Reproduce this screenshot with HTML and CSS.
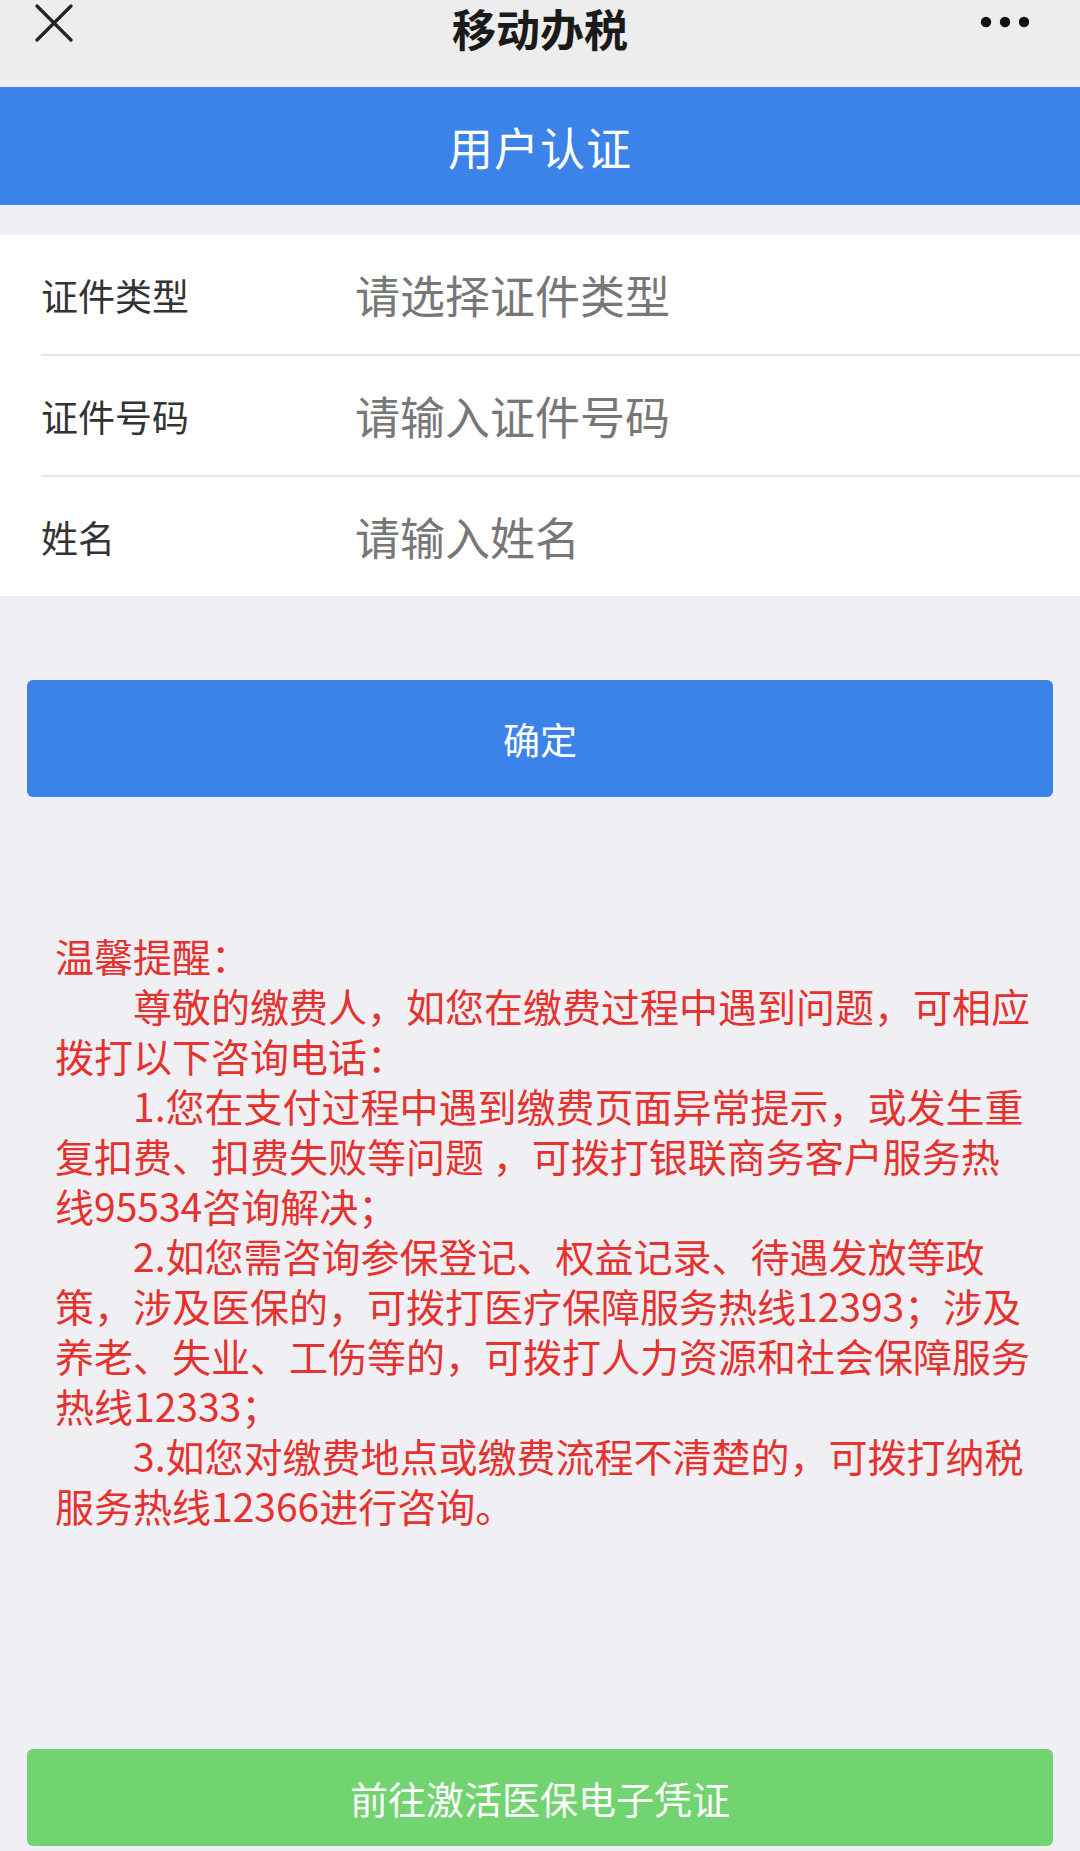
FILE: index.html
```html
<!DOCTYPE html>
<html lang="zh-CN">
<head>
<meta charset="utf-8">
<title>移动办税</title>
<link rel="stylesheet" href="styles.css">
</head>
<body>
<div class="page">
  <div class="topbar">
    <div class="tb-left">
      <svg class="close-icon" width="38" height="38" viewBox="0 0 38 38">
        <path d="M2 2 L36 36 M36 2 L2 36" stroke="#222" stroke-width="3.2" stroke-linecap="round" fill="none"/>
      </svg>
    </div>
    <div class="tb-title">移动办税</div>
    <div class="tb-right">
      <svg class="more-icon" width="50" height="12" viewBox="0 0 50 12">
        <circle cx="6" cy="6" r="5.2" fill="#111"/>
        <circle cx="25" cy="6" r="5.2" fill="#111"/>
        <circle cx="44" cy="6" r="5.2" fill="#111"/>
      </svg>
    </div>
  </div>

  <div class="header">用户认证</div>

  <div class="form">
    <div class="row">
      <div class="label">证件类型</div>
      <div class="placeholder">请选择证件类型</div>
    </div>
    <div class="row">
      <div class="label">证件号码</div>
      <div class="placeholder">请输入证件号码</div>
    </div>
    <div class="row">
      <div class="label">姓名</div>
      <div class="placeholder">请输入姓名</div>
    </div>
  </div>

  <div class="btn btn-confirm">确定</div>

  <div class="notice">
    <div class="notice-title">温馨提醒：</div>
    <p class="para">尊敬的缴费人，如您在缴费过程中遇到问题，可相应拨打以下咨询电话：</p>
    <p class="para">1.您在支付过程中遇到缴费页面异常提示，或发生重复扣费、扣费失败等问题 ，可拨打银联商务客户服务热线95534咨询解决；</p>
    <p class="para">2.如您需咨询参保登记、权益记录、待遇发放等政策，涉及医保的，可拨打医疗保障服务热线12393；涉及养老、失业、工伤等的，可拨打人力资源和社会保障服务热线12333；</p>
    <p class="para">3.如您对缴费地点或缴费流程不清楚的，可拨打纳税服务热线12366进行咨询。</p>
  </div>

  <div class="btn btn-green">前往激活医保电子凭证</div>
</div>
</body>
</html>
```

FILE: styles.css
```css
html, body {
  margin: 0;
  padding: 0;
}
body {
  background: #efeff4;
  font-family: "Noto Sans CJK SC", "Noto Sans", sans-serif;
  width: 1080px;
  height: 1851px;
  overflow: hidden;
}
.page {
  display: flex;
  flex-direction: column;
}
.topbar {
  height: 82px;
  background: #ededed;
  display: grid;
  grid-template-columns: 1fr auto 1fr;
  align-items: start;
}
.tb-left {
  padding: 4px 0 0 35px;
}
.close-icon {
  display: block;
}
.tb-title {
  font-size: 44px;
  font-weight: 700;
  color: #1a1a1a;
  line-height: 56px;
  padding-top: 0;
}
.tb-right {
  display: flex;
  justify-content: flex-end;
  padding: 16px 50px 0 0;
}
.more-icon {
  display: block;
}
.header {
  margin-top: 5px;
  height: 118px;
  background: #3b83e9;
  color: #fff;
  font-size: 45px;
  display: flex;
  align-items: center;
  justify-content: center;
  letter-spacing: 1px;
}
.form {
  margin-top: 30px;
  background: #fff;
}
.row {
  margin-left: 41px;
  height: 119px;
  display: flex;
  align-items: center;
}
.row + .row {
  border-top: 2px solid #e7e7e9;
}
.label {
  width: 314px;
  padding-left: 0;
  font-size: 37px;
  color: #333;
}
.placeholder {
  font-size: 45px;
  color: #777;
}
.btn {
  margin: 0 27px;
  border-radius: 6px;
  color: #fff;
  display: flex;
  align-items: center;
  justify-content: center;
}
.btn-confirm {
  margin-top: 84px;
  height: 117px;
  background: #3b83e9;
  font-size: 37px;
}
.notice {
  margin-top: 133px;
  padding: 0 48px 0 55px;
  color: #e5322e;
  font-size: 39px;
  line-height: 50px;
}
.notice-title {
  margin: 0;
}
.para {
  margin: 0;
  text-indent: 2em;
}
.btn-green {
  margin-top: 219px;
  height: 97px;
  background: #72d371;
  font-size: 38px;
}
```
